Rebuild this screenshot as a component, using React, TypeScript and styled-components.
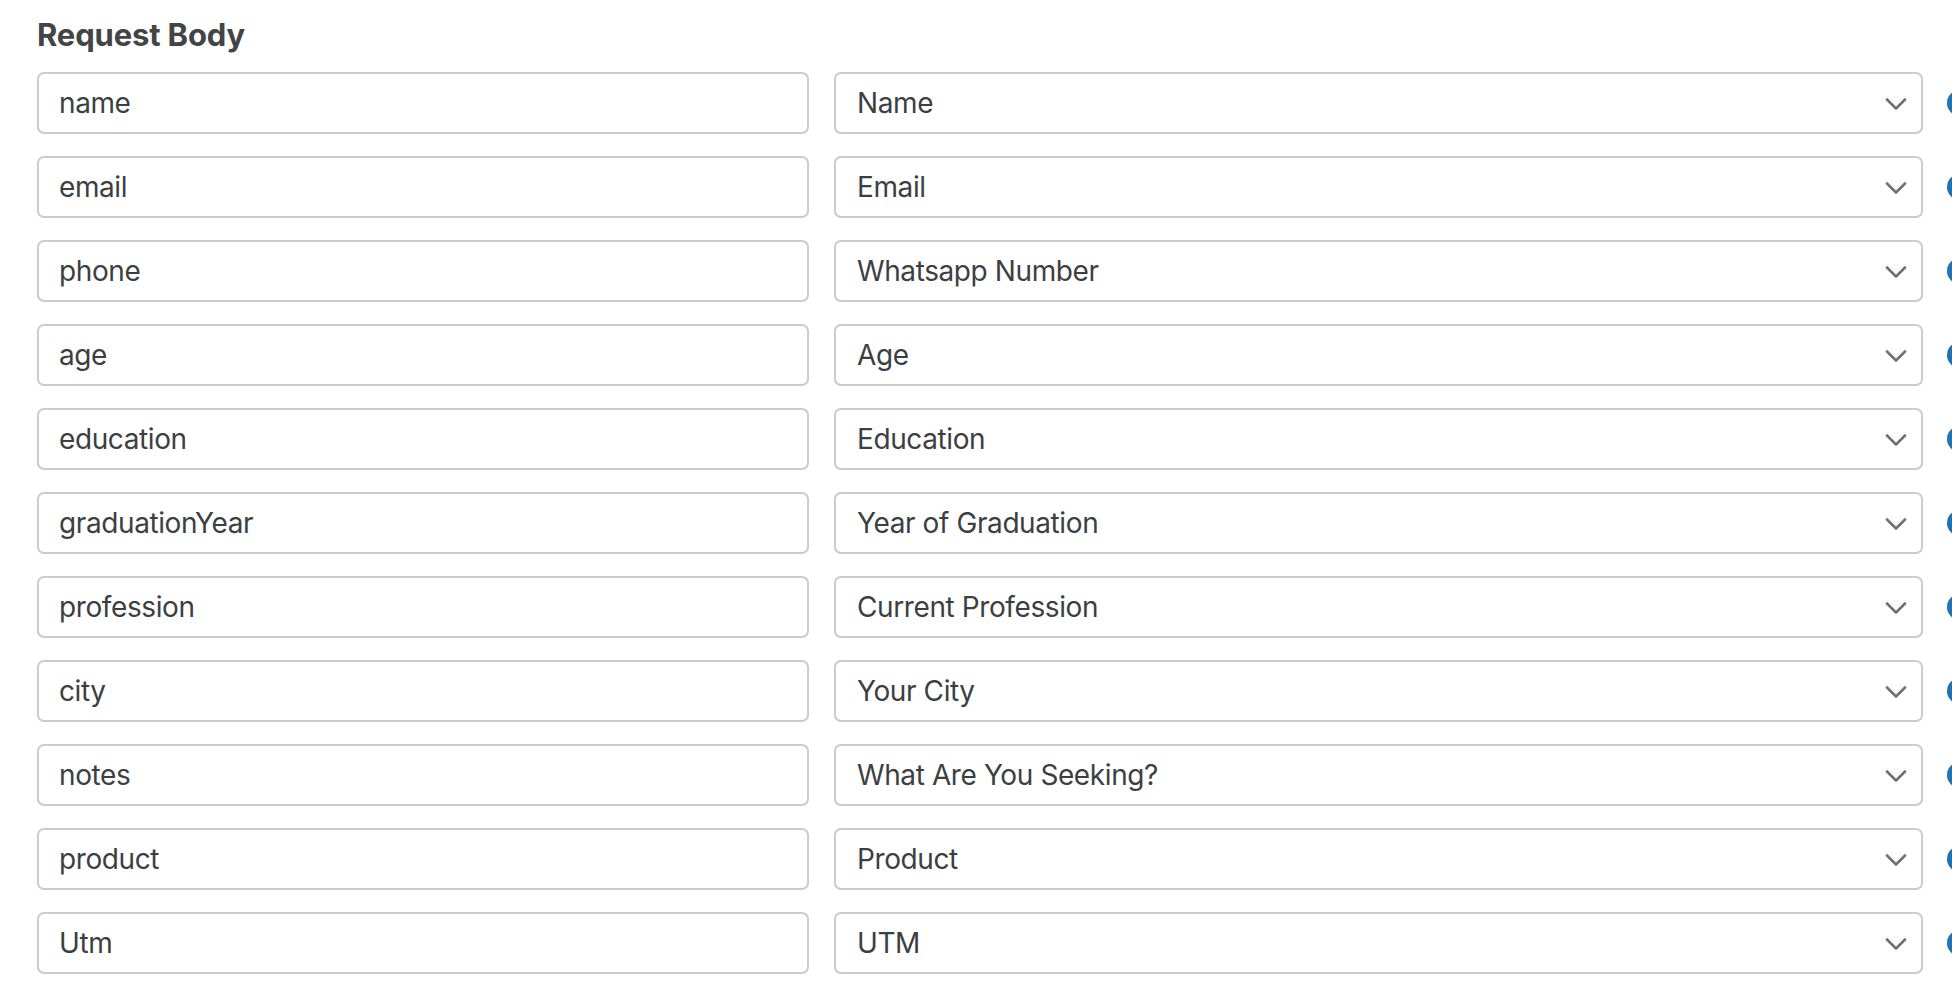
import styled, { createGlobalStyle } from 'styled-components'

const GlobalStyle = createGlobalStyle`
  html, body {
    margin: 0;
    padding: 0;
    background: #ffffff;
    overflow: hidden;
  }
  body {
    font-family: Inter, "Liberation Sans", sans-serif;
    color: #3c3f42;
  }
`

interface Mapping {
  key: string
  field: string
}

const mappings: Mapping[] = [
  { key: 'name', field: 'Name' },
  { key: 'email', field: 'Email' },
  { key: 'phone', field: 'Whatsapp Number' },
  { key: 'age', field: 'Age' },
  { key: 'education', field: 'Education' },
  { key: 'graduationYear', field: 'Year of Graduation' },
  { key: 'profession', field: 'Current Profession' },
  { key: 'city', field: 'Your City' },
  { key: 'notes', field: 'What Are You Seeking?' },
  { key: 'product', field: 'Product' },
  { key: 'Utm', field: 'UTM' },
]

const Chevron = () => (
  <ChevronIcon width="22" height="12" viewBox="0 0 22 12" fill="none">
    <path d="M2 1.5l9 9 9-9" stroke="#6e7176" strokeWidth="2.6" strokeLinecap="round" strokeLinejoin="round" />
  </ChevronIcon>
)

const App = () => {
  return (
    <Page>
      <GlobalStyle />
      <Title>Request Body</Title>
      <Rows>
        {mappings.map((m) => (
          <Row key={m.key}>
            <TextInput defaultValue={m.key} readOnly />
            <SelectBox>
              <SelectValue>{m.field}</SelectValue>
              <Chevron />
            </SelectBox>
            <RemoveButton aria-label="remove" />
          </Row>
        ))}
      </Rows>
    </Page>
  )
}

const Page = styled.div`
  padding: 16px 0 0 37px;
  width: 1952px;
  box-sizing: border-box;
`

const Title = styled.h3`
  margin: 0 0 19px;
  font-size: 31px;
  line-height: 37px;
  font-weight: 700;
  letter-spacing: -0.15px;
  color: #434445;
`

const Rows = styled.div`
  display: flex;
  flex-direction: column;
  gap: 22px;
`

const Row = styled.div`
  display: grid;
  grid-template-columns: 772px 1089px 26px;
  column-gap: 25px;
  align-items: center;
`

const fieldBox = `
  box-sizing: border-box;
  height: 62px;
  border: 2px solid #cbcbcb;
  border-radius: 7px;
  background: #ffffff;
  font-family: Inter, "Liberation Sans", sans-serif;
  font-size: 28px;
  letter-spacing: -0.4px;
  color: #3c3f42;
`

const TextInput = styled.input`
  ${fieldBox}
  width: 100%;
  padding: 0 20px;
  outline: none;
`

const SelectBox = styled.div`
  ${fieldBox}
  display: flex;
  align-items: center;
  justify-content: space-between;
  padding: 0 14px 0 21px;
`

const SelectValue = styled.span`
  white-space: nowrap;
  overflow: hidden;
  text-overflow: ellipsis;
`

const ChevronIcon = styled.svg`
  flex: 0 0 auto;
  margin-top: 2px;
`

const RemoveButton = styled.span`
  display: block;
  width: 26px;
  height: 26px;
  margin-left: -1px;
  border-radius: 50%;
  background: #2271b1;
`

export default App
